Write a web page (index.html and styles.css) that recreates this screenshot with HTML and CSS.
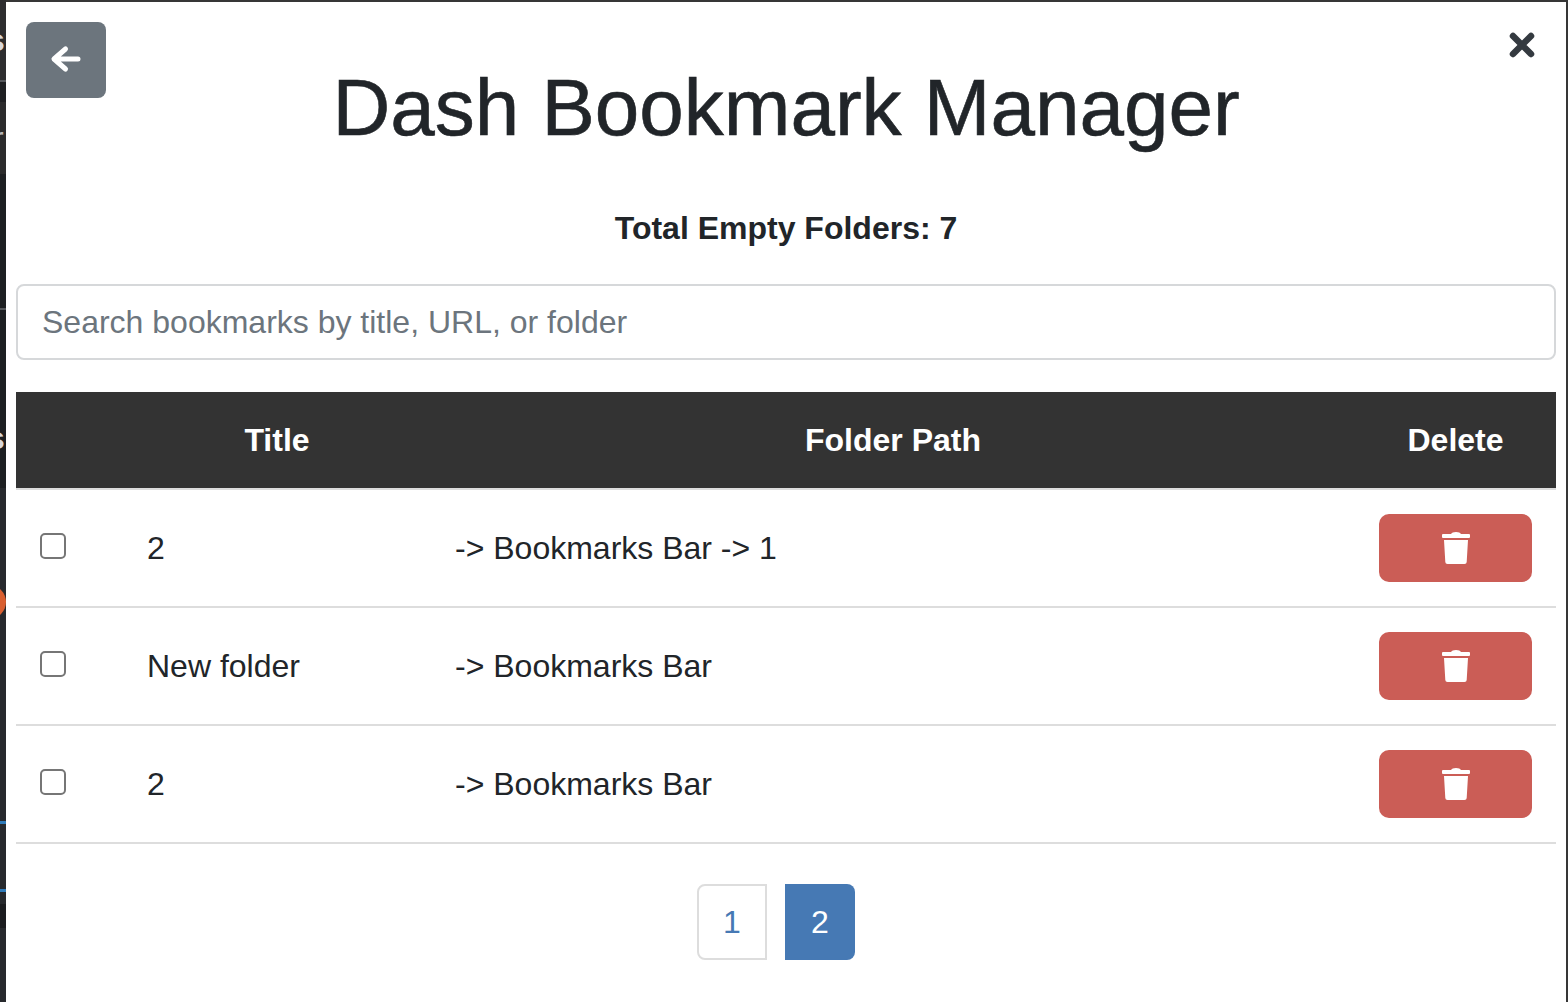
FILE: index.html
```html
<!DOCTYPE html>
<html>
<head>
<title>Dash Bookmark Manager</title>
<meta charset="utf-8" />
<link rel="stylesheet" href="styles.css">
</head>
<body>
  <!-- what is left of the page behind the modal -->
  <div class="behind">
    <i class="behind-band top1"></i>
    <i class="behind-band top2"></i>
    <i class="behind-band top3"></i>
    <i class="behind-band top4"></i>
    <i class="behind-band top5"></i>
    <span class="behind-s s1">s</span>
    <span class="behind-s s2">r</span>
    <span class="behind-s s3">s</span>
    <i class="behind-line l1"></i>
    <i class="behind-line l2"></i>
    <i class="behind-dot"></i>
    <i class="behind-blue b1"></i>
    <i class="behind-blue b2"></i>
  </div>

  <div class="modal">
    <button class="back-btn" type="button">
      <svg width="32" height="30" viewBox="0 0 32 30"><path d="M15.500 4 4 14l11.500 10M5 14h23" fill="none" stroke="#fff" stroke-width="5" stroke-linecap="round" stroke-linejoin="round"/></svg>
    </button>
    <button class="close-btn" type="button">
      <svg width="28" height="28" viewBox="0 0 28 28"><path d="M5 5 23 23M23 5 5 23" fill="none" stroke="#343a40" stroke-width="6.500" stroke-linecap="round"/></svg>
    </button>

    <h1 class="title">Dash Bookmark Manager</h1>
    <p class="total">Total Empty Folders: 7</p>
    <input class="search" type="text" placeholder="Search bookmarks by title, URL, or folder">

    <table class="list">
      <colgroup>
        <col class="col-check"><col class="col-title"><col class="col-path"><col class="col-del">
      </colgroup>
      <thead>
        <tr><th></th><th>Title</th><th>Folder Path</th><th>Delete</th></tr>
      </thead>
      <tbody>
        <tr>
          <td><span class="check"></span></td>
          <td>2</td>
          <td>-&gt; Bookmarks Bar -&gt; 1</td>
          <td><button class="del-btn" type="button"><svg width="28" height="32" viewBox="0 0 28 32"><path class="trash" d="M1 2h8Q10 0 14 0t5 2h8q1 0 1 1v2q0 1-1 1H1Q0 6 0 5V3q0-1 1-1ZM2 8h24l-1.300 22q-.1 2-2.200 2h-17q-2.100 0-2.200-2Z"/></svg></button></td>
        </tr>
        <tr>
          <td><span class="check"></span></td>
          <td>New folder</td>
          <td>-&gt; Bookmarks Bar</td>
          <td><button class="del-btn" type="button"><svg width="28" height="32" viewBox="0 0 28 32"><path class="trash" d="M1 2h8Q10 0 14 0t5 2h8q1 0 1 1v2q0 1-1 1H1Q0 6 0 5V3q0-1 1-1ZM2 8h24l-1.300 22q-.1 2-2.200 2h-17q-2.100 0-2.200-2Z"/></svg></button></td>
        </tr>
        <tr>
          <td><span class="check"></span></td>
          <td>2</td>
          <td>-&gt; Bookmarks Bar</td>
          <td><button class="del-btn" type="button"><svg width="28" height="32" viewBox="0 0 28 32"><path class="trash" d="M1 2h8Q10 0 14 0t5 2h8q1 0 1 1v2q0 1-1 1H1Q0 6 0 5V3q0-1 1-1ZM2 8h24l-1.300 22q-.1 2-2.200 2h-17q-2.100 0-2.200-2Z"/></svg></button></td>
        </tr>
      </tbody>
    </table>

    <div class="pages">
      <a class="page" href="#">1</a>
      <a class="page current" href="#">2</a>
    </div>
  </div>
</body>
</html>
```

FILE: styles.css
```css
*{
  margin:0;
  padding:0;
  box-sizing:border-box;
}
html,body{
  height:100%;
  overflow:hidden;
}
body{
  background:#363636;
  font-family:"Liberation Sans",Arial,sans-serif;
  color:#212529;
  padding:2px 2px 0 6px;
  position:relative;
}

/* background page slivers */
.behind{
  position:absolute;
  left:0;
  top:0;
  width:6px;
  height:100%;
  overflow:hidden;
  background:#27292d;
}
.behind-band{
  position:absolute;
  left:0;
  width:6px;
}
.top1{top:0;height:80px;background:#2d2d2f;}
.top2{top:82px;height:20px;background:#1e1f22;}
.top3{top:102px;height:72px;background:#2b2b2c;}
.top4{top:174px;height:314px;background:#1d1f22;}
.top5{top:904px;height:24px;background:#1b1c1f;}
.behind-s{
  position:absolute;
  color:#d8d8da;
  font-size:32px;
  font-weight:bold;
  line-height:32px;
}
.s1{left:-13px;top:24px;}
.s2{left:-7px;top:122px;font-weight:normal;color:#b5b5b7;}
.s3{left:-13px;top:422px;}
.behind-line{
  position:absolute;
  left:0;
  width:6px;
  height:2px;
  background:#55575b;
}
.l1{top:80px;}
.l2{top:308px;}
.behind-dot{
  position:absolute;
  left:-28px;
  top:585px;
  width:34px;
  height:34px;
  border-radius:50%;
  background:#d95f30;
}
.behind-blue{
  position:absolute;
  left:0;
  width:6px;
  height:3px;
  background:#2f7ab8;
}
.b1{top:821px;}
.b2{top:889px;}

.modal{
  position:relative;
  height:100%;
  background:#fff;
  padding:0 10px;
}
.back-btn{
  position:absolute;
  left:20px;
  top:20px;
  width:80px;
  height:76px;
  background:#6c757d;
  border:0;
  border-radius:8px;
  display:flex;
  align-items:center;
  justify-content:center;
}
.close-btn{
  position:absolute;
  right:30px;
  top:29px;
  width:28px;
  height:28px;
  background:none;
  border:0;
  display:flex;
}

.title{
  font-size:80px;
  font-weight:500;
  line-height:96px;
  text-align:center;
  padding-top:58px;
  -webkit-text-stroke:0.6px #212529;
}
.total{
  font-size:32px;
  font-weight:bold;
  line-height:48px;
  text-align:center;
  margin-top:48px;
}
.search{
  display:block;
  width:100%;
  height:76px;
  margin-top:32px;
  padding:0 24px;
  border:2px solid #d6d8da;
  border-radius:8px;
  font:32px "Liberation Sans",Arial,sans-serif;
  color:#495057;
}
.search::placeholder{
  color:#6c757d;
  opacity:1;
}

.list{
  width:100%;
  margin-top:32px;
  border-collapse:collapse;
  table-layout:fixed;
  font-size:32px;
}
.col-check{width:107px;}
.col-title{width:308px;}
.col-del{width:201px;}
.list th{
  height:97px;
  background:#333;
  color:#fff;
  font-weight:bold;
  text-align:center;
  border-bottom:2px solid #ddd;
}
.list td{
  height:118px;
  padding:0 24px;
  border-bottom:2px solid #ddd;
  vertical-align:middle;
}
.check{
  display:block;
  width:26px;
  height:26px;
  margin-bottom:4px;
  border:2px solid #767676;
  border-radius:5px;
}
.del-btn{
  display:flex;
  align-items:center;
  justify-content:center;
  width:100%;
  height:68px;
  background:#cb5d56;
  border:0;
  border-radius:10px;
}
.trash{
  fill:#fff;
}

.pages{
  display:flex;
  justify-content:center;
  gap:18px;
  margin-top:40px;
  padding-right:20px;
}
.page{
  display:flex;
  align-items:center;
  justify-content:center;
  width:70px;
  height:76px;
  border:2px solid #ddd;
  border-radius:8px 0 0 8px;
  color:#4679b4;
  font-size:32px;
  text-decoration:none;
}
.page.current{
  background:#4679b4;
  border:0;
  border-radius:0 8px 8px 0;
  color:#fff;
}
```
